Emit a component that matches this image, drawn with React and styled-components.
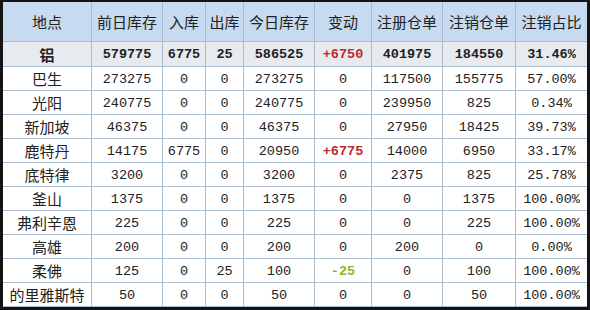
import React from 'react'
import styled, { createGlobalStyle } from 'styled-components'

const GLOBAL = createGlobalStyle`
	html, body {
		margin: 0;
		padding: 0;
		background: #ffffff;
	}
`

const FRAME = styled.section`
	width: 590px;
	height: 310px;
	box-sizing: border-box;
	border: 3px solid #141414;
	border-top-width: 2px;
	background: #ffffff;
	overflow: hidden;
`

const GRID = styled.div`
	display: grid;
	grid-template-columns: 89px 71px 43px 38px 71px 57px 71px 73px 71px;
	grid-template-rows: 40px 25px repeat(10, 24px);
`

const CELL = styled.div`
	box-sizing: border-box;
	display: flex;
	align-items: center;
	justify-content: center;
	border-right: 1px solid #a9bccf;
	border-bottom: 1px solid #a9bccf;
	background: ${p => (p.$head ? '#c6daf0' : p.$total ? '#e7ebf0' : '#ffffff')};
	color: ${p => (p.$tone === 'up' ? '#c3262e' : p.$tone === 'down' ? '#86b832' : '#222222')};
	font-family: ${p => (p.$cjk ? '"Noto Sans CJK SC", sans-serif' : '"Liberation Mono", monospace')};
	font-size: ${p => (p.$cjk ? '15px' : '13.5px')};
	font-weight: ${p => (p.$bold ? 700 : 400)};
	white-space: nowrap;
	padding-top: ${p => (p.$cjk ? '0' : '1px')};

	&:nth-child(9n) {
		border-right: none;
	}
`

const HEADERS = ['地点', '前日库存', '入库', '出库', '今日库存', '变动', '注册仓单', '注销仓单', '注销占比']

const TOTAL = ['铝', '579775', '6775', '25', '586525', '+6750', '401975', '184550', '31.46%']

const ROWS = [
	['巴生', '273275', '0', '0', '273275', '0', '117500', '155775', '57.00%'],
	['光阳', '240775', '0', '0', '240775', '0', '239950', '825', '0.34%'],
	['新加坡', '46375', '0', '0', '46375', '0', '27950', '18425', '39.73%'],
	['鹿特丹', '14175', '6775', '0', '20950', '+6775', '14000', '6950', '33.17%'],
	['底特律', '3200', '0', '0', '3200', '0', '2375', '825', '25.78%'],
	['釜山', '1375', '0', '0', '1375', '0', '0', '1375', '100.00%'],
	['弗利辛恩', '225', '0', '0', '225', '0', '0', '225', '100.00%'],
	['高雄', '200', '0', '0', '200', '0', '200', '0', '0.00%'],
	['柔佛', '125', '0', '25', '100', '-25', '0', '100', '100.00%'],
	['的里雅斯特', '50', '0', '0', '50', '0', '0', '50', '100.00%'],
]

const tone_of = v => (v.startsWith('+') ? 'up' : v.startsWith('-') ? 'down' : null)

const WAREHOUSE_TABLE = () => {
	return (
		<FRAME>
			<GLOBAL />
			<GRID>
				{HEADERS.map(h => (
					<CELL key={h} $head $cjk children={h} />
				))}
				{TOTAL.map((v, i) => (
					<CELL key={'t' + i} $total $bold $cjk={i === 0} $tone={tone_of(v)} children={v} />
				))}
				{ROWS.map(row =>
					row.map((v, i) => {
						const tone = i === 5 ? tone_of(v) : null
						return <CELL key={row[0] + i} $cjk={i === 0} $bold={!!tone} $tone={tone} children={v} />
					})
				)}
			</GRID>
		</FRAME>
	)
}

export default WAREHOUSE_TABLE
